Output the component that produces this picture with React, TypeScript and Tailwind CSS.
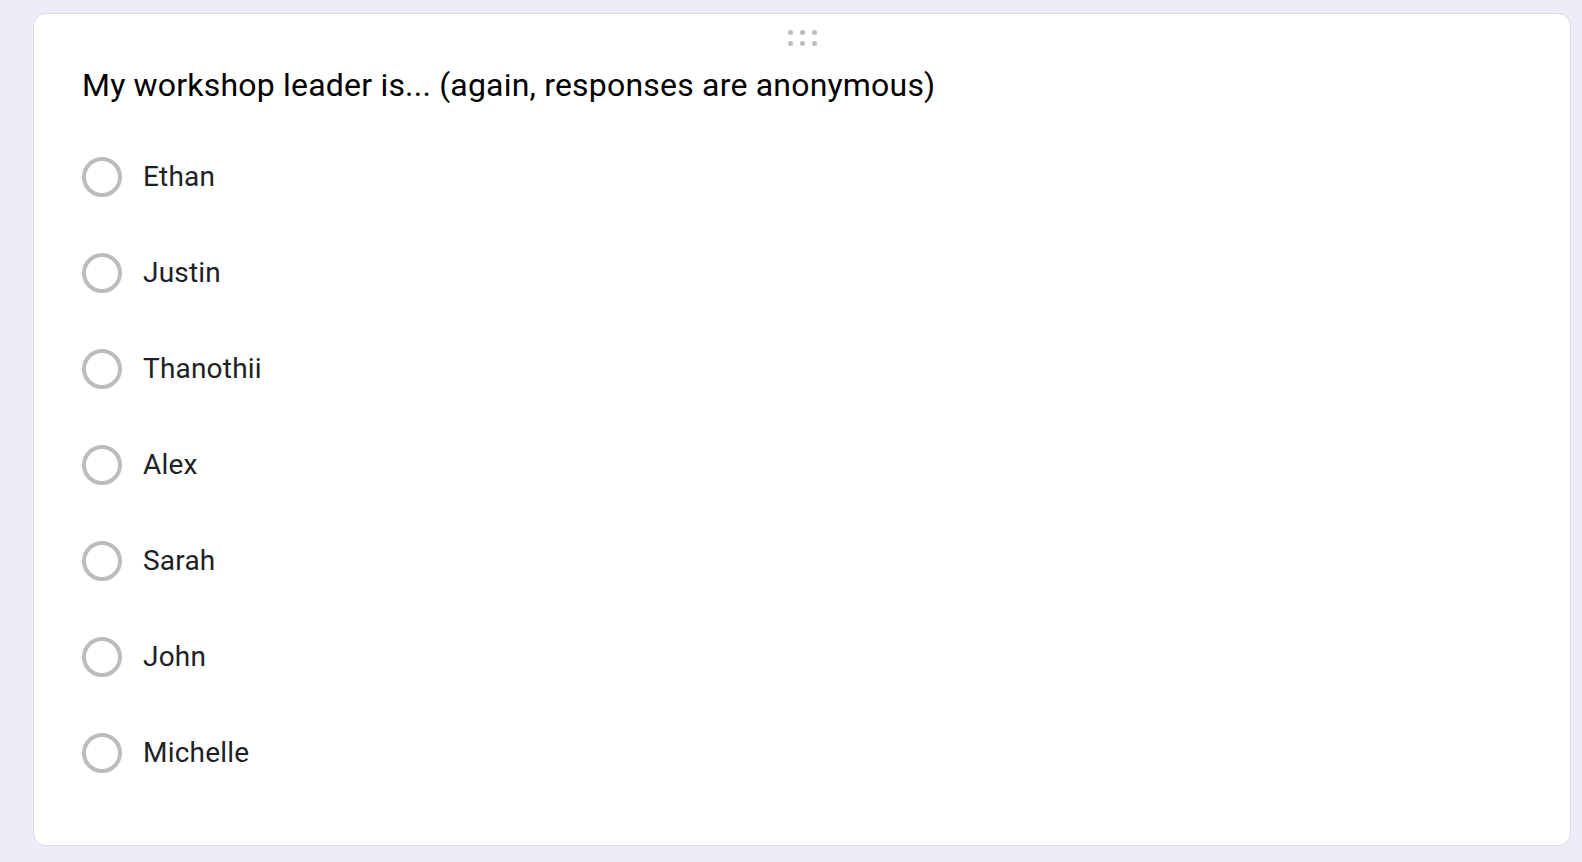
const options = ['Ethan', 'Justin', 'Thanothii', 'Alex', 'Sarah', 'John', 'Michelle']

function DragHandle() {
  return (
    <div className="grid grid-cols-3 gap-x-[7px] gap-y-[6px]">
      {[0, 1, 2, 3, 4, 5].map((i) => (
        <span key={i} className="block h-[5px] w-[5px] rounded-full bg-[#bdbdbd]" />
      ))}
    </div>
  )
}

export default function App() {
  return (
    <div className="min-h-[862px] w-full bg-[#f0ebf8] pl-[33px] pt-[13px] font-['Roboto',sans-serif]">
      <div className="h-[833px] w-[1538px] rounded-[13px] border border-[#dadce0] bg-white px-[48px]">
        <div className="flex justify-center pt-[16px]">
          <DragHandle />
        </div>
        <h2 className="mt-[19px] text-[32px] font-normal leading-[40px] tracking-[0.2px] text-black">
          My workshop leader is... (again, responses are anonymous)
        </h2>
        <div className="mt-[24px] flex flex-col">
          {options.map((name) => (
            <label key={name} className="flex h-[96px] cursor-pointer items-center gap-[21px]">
              <span className="block h-[40px] w-[40px] shrink-0 rounded-full border-[4px] border-[#bdbdbd]" />
              <span className="text-[28px] leading-[36px] tracking-[0.2px] text-[#202124]">{name}</span>
            </label>
          ))}
        </div>
      </div>
    </div>
  )
}
